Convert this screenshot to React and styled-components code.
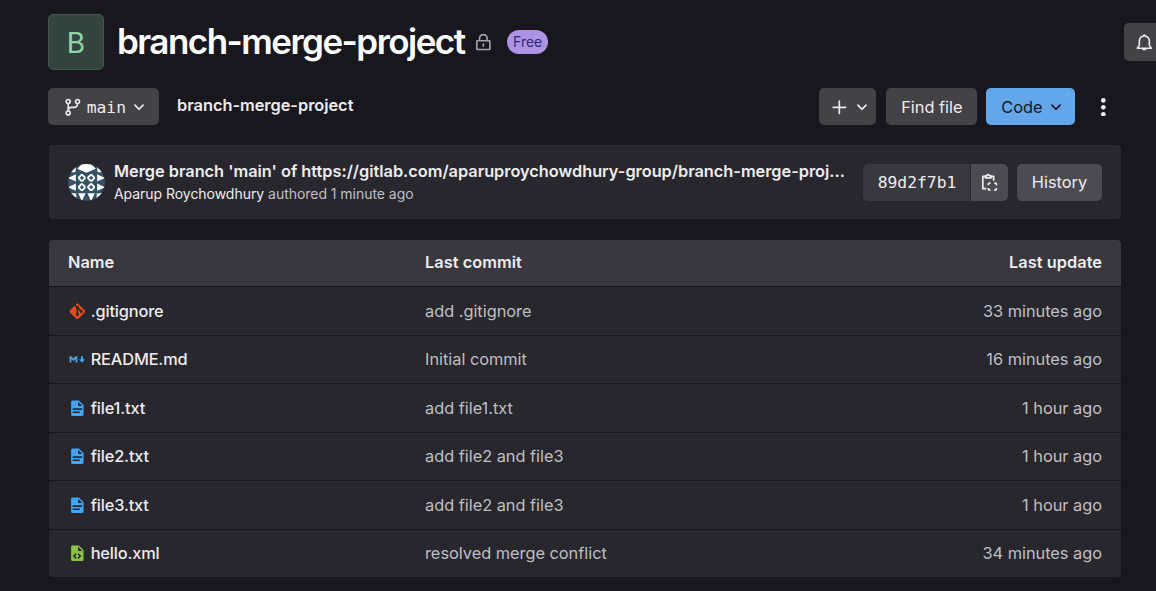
import React from "react";
import styled, { createGlobalStyle } from "styled-components";

const GlobalStyle = createGlobalStyle`
  * { box-sizing: border-box; }
  body {
    margin: 0;
    background: #18171d;
    color: #ececef;
    font-family: Inter, "Liberation Sans", sans-serif;
    font-size: 16.33px;
    overflow: hidden;
  }
`;

const Page = styled.main`
  width: 1156px;
  height: 591px;
  padding: 14px 0 0 48px;
  overflow: hidden;
`;

const Header = styled.header`
  display: flex;
  height: 56px;
`;

const ProjectAvatar = styled.div`
  width: 56px;
  height: 56px;
  padding-top: 2px;
  border-radius: 5px;
  border: 1px solid #41574d;
  background: #36443f;
  color: #91d4a8;
  font-size: 28px;
  display: flex;
  align-items: center;
  justify-content: center;
`;

const Title = styled.h1`
  margin: 0 0 0 13px;
  width: 349px;
  font-size: 35px;
  line-height: 54px;
  font-weight: 600;
  letter-spacing: -1.53px;
  color: #fff;
  white-space: nowrap;
`;

const LockSlot = styled.span`
  display: flex;
  margin: 19px 0 0 8px;
  color: #a4a3a8;
`;

const Badge = styled.span`
  margin: 16px 0 0 14px;
  width: 41px;
  height: 24px;
  padding-left: 1px;
  border-radius: 12px;
  background: #ac93e6;
  color: #2f2a6b;
  font-size: 14px;
  line-height: 24px;
  text-align: center;
`;

const Bar = styled.div`
  display: flex;
  margin-top: 18px;
  height: 37px;
  padding-right: 43px;
`;

const Button = styled.button`
  display: flex;
  align-items: center;
  justify-content: center;
  flex: none;
  gap: ${(p) => p.$gap || 0}px;
  width: ${(p) => p.$width}px;
  height: 37px;
  padding: 0;
  border: 0;
  border-radius: ${(p) => p.$radius || "5px"};
  background: ${(p) => p.$bg || "#434247"};
  color: ${(p) => p.$color || "#ececef"};
  font-family: ${(p) => (p.$mono ? '"DejaVu Sans Mono", monospace' : "inherit")};
  font-size: 16.33px;
  white-space: nowrap;
`;

const MenuButton = styled(Button)`
  padding: 1px 0 0 5px;
`;

const AddButton = styled(MenuButton)`
  margin-right: 1px;
`;

const ShaLabel = styled(Button)`
  padding-left: 1px;
`;

const BellButton = styled(Button)`
  height: 38px;
  margin: 9px 0 0 auto;
  justify-content: flex-start;
  padding-left: 11px;
  border-radius: 5px 0 0 5px;
`;

const Crumb = styled.strong`
  margin-left: 18px;
  font-weight: 600;
  line-height: 34px;
`;

const Actions = styled.div`
  display: flex;
  margin-left: auto;
  gap: 9px;
`;

const More = styled.span`
  display: flex;
  align-items: center;
  margin-left: 10px;
  padding-top: 1px;
`;

const CommitPanel = styled.section`
  display: flex;
  align-items: center;
  width: 1072px;
  height: 74px;
  margin: 20px 0 0 1px;
  padding: 0 19px;
  border-radius: 4px;
  background: #28272d;
`;

const CommitText = styled.div`
  margin-left: 9px;
  width: 740px;
`;

const CommitTitle = styled.div`
  font-weight: 600;
  line-height: 24px;
  letter-spacing: -0.01px;
  white-space: nowrap;
`;

const CommitMeta = styled.div`
  font-size: 14px;
  line-height: 22px;
  letter-spacing: -0.04px;
  color: #bfbfc3;
  span { color: #ececef; }
`;

const Joined = styled.div`
  display: flex;
  gap: 1px;
`;

const Table = styled.section`
  width: 1072px;
  margin: 21px 0 0 1px;
  border-radius: 4px;
  overflow: hidden;
  background: #28272d;
`;

const Row = styled.div`
  display: grid;
  grid-template-columns: 357px 1fr auto;
  align-items: center;
  height: ${(p) => (p.$head ? 47 : p.$last ? 47.5 : 48.5)}px;
  padding: 0 19px ${(p) => (p.$head ? 2 : 0)}px;
  border-bottom: ${(p) => (p.$last ? 0 : 1)}px solid #18171d;
  background: ${(p) => (p.$head ? "#3a383f" : "transparent")};
  color: ${(p) => (p.$head ? "#ececef" : "#bfbfc3")};
  font-weight: ${(p) => (p.$head ? 600 : 400)};
  letter-spacing: ${(p) => (p.$head ? "0.04px" : "-0.01px")};
  line-height: 24px;
`;

const IconSvg = styled.svg`
  flex: none;
`;

const FileName = styled.span`
  display: flex;
  align-items: center;
  gap: 4px;
  color: #ececef;
  font-weight: 500;
  letter-spacing: -0.14px;

  ${IconSvg} {
    margin-top: 1px;
  }
`;

function Icon({ size = 18.67, box = 16, color = "currentColor", children }) {
  return (
    <IconSvg width={size} height={size} viewBox={`0 0 ${box} ${box}`} fill={color}>
      {children}
    </IconSvg>
  );
}

const Chevron = () => (
  <Icon size={18}>
    <path d="M4.4 6.4 8 10l3.6-3.6" fill="none" stroke="currentColor" strokeWidth="1.5" strokeLinecap="round" strokeLinejoin="round" />
  </Icon>
);

const Branch = () => (
  <Icon>
    <g fill="none" stroke="currentColor" strokeWidth="1.4">
      <circle cx="3.6" cy="3" r="1.7" />
      <circle cx="3.6" cy="12.8" r="1.7" />
      <circle cx="11.6" cy="3" r="1.7" />
      <path d="M3.6 4.7v6.4M11.6 4.7v.5A2.75 2.75 0 0 1 8.85 8h-2.5A2.75 2.75 0 0 0 3.6 10.75" />
    </g>
  </Icon>
);

const Plus = () => (
  <Icon>
    <path d="M8 2.6v10.8M2.6 8h10.8" stroke="currentColor" strokeWidth="1.4" strokeLinecap="round" />
  </Icon>
);

const Lock = () => (
  <Icon>
    <g fill="none" stroke="currentColor" strokeWidth="1.4">
      <rect x="2.4" y="6.6" width="11.2" height="7.6" rx=".5" />
      <path d="M4.75 6.5V4.6a3.25 3.25 0 0 1 6.5 0v1.9M8 9v2.8" />
    </g>
  </Icon>
);

const Bell = () => (
  <Icon>
    <g fill="none" stroke="currentColor" strokeWidth="1.4" strokeLinejoin="round">
      <path d="M8 1v1.3M3.7 10.6V6.8a4.3 4.3 0 0 1 8.6 0v3.8l1.7 2.5H2z" />
      <path d="M6.8 14.2h2.4" strokeLinecap="round" />
    </g>
  </Icon>
);

const Dots = () => (
  <Icon>
    <circle cx="8" cy="2.1" r="2" />
    <circle cx="8" cy="8" r="2" />
    <circle cx="8" cy="13.9" r="2" />
  </Icon>
);

const Copy = () => (
  <Icon>
    <g fill="none" stroke="currentColor" strokeWidth="1.5">
      <path d="M4.5 2.9H2.4v10.6h2.4M9.5 2.9h2.2v3" strokeLinejoin="round" strokeLinecap="round" />
      <path d="M4.7 4.2V2.4h1a1.4 1.4 0 0 1 2.7 0h1v1.8z" strokeLinejoin="round" />
      <path d="M7.2 10.4v-1a.8.8 0 0 1 .8-.8h1M12.2 8.6h1a.8.8 0 0 1 .8.8v1M14 12.8v1a.8.8 0 0 1-.8.8h-1M9 14.6H8a.8.8 0 0 1-.8-.8v-1" />
    </g>
  </Icon>
);

const doc = "M13 9h5.5L13 3.5V9M6 2h8l6 6v12a2 2 0 0 1-2 2H6a2 2 0 0 1-2-2V4c0-1.11.89-2 2-2";

function FileIcon({ kind }) {
  if (kind === "git")
    return (
      <Icon box={24} color="#e64a19">
        <path d="M2.6 10.59 8.38 4.8l1.69 1.7c-.24.85.15 1.78.93 2.23v5.54c-.6.34-1 .99-1 1.73a2 2 0 0 0 4 0c0-.74-.4-1.39-1-1.73V9.41l2.07 2.09c-.07.15-.07.32-.07.5a2 2 0 1 0 2-2c-.18 0-.35 0-.5.07L13.93 7.5a1.98 1.98 0 0 0-1.15-2.34c-.43-.16-.88-.2-1.28-.09L9.8 3.38l.79-.78c.78-.79 2.04-.79 2.82 0l7.99 7.99c.79.78.79 2.04 0 2.82l-7.99 7.99c-.78.79-2.04.79-2.82 0L2.6 13.41c-.79-.78-.79-2.04 0-2.82z" />
      </Icon>
    );
  if (kind === "md")
    return (
      <Icon box={24} color="#42a5f5">
        <path d="M2 16V8h2.2l2.8 3 2.8-3H12v8h-2.4v-4.6L7 14.1l-2.6-2.7V16zM16.7 8h2.6v4H22l-4 4.5-4-4.5h2.7z" />
      </Icon>
    );
  if (kind === "xml")
    return (
      <Icon box={24} color="#8bc34a">
        <path fillRule="evenodd" d={doc + "m.12 13.5 3.74 3.74 1.42-1.41-2.33-2.33 2.33-2.33-1.42-1.41-3.74 3.74m11.16 0-3.74-3.74-1.42 1.41 2.33 2.33-2.33 2.33 1.42 1.41 3.74-3.74z"} />
      </Icon>
    );
  return (
    <Icon box={24} color="#42a5f5">
      <path fillRule="evenodd" d={doc + "m9 16v-2H6v2h9m3-4v-2H6v2h12z"} />
    </Icon>
  );
}

function Identicon() {
  return (
    <IconSvg width="37" height="37" viewBox="0 0 40 40">
      <clipPath id="round"><circle cx="20" cy="20" r="20" /></clipPath>
      <g clipPath="url(#round)">
        <rect width="40" height="40" fill="#335268" />
        <g fill="#fff">
          <path d="M10 5 15 0h10l5 5-10 4.5z" />
          <path d="M0 0h9L8 9 0 9zM40 0H31l1 9 8 0zM0 40V31l9 1v8zM40 40V31l-9 1v8z" />
          {[90, 180, 270].map((a) => (
            <path key={a} transform={`rotate(${a} 20 20)`} d="M11 8.5 15 0l4 8.5zM21 8.5l4-8.5 4 8.5z" />
          ))}
          {[15, 25].map((x) => [15, 25].map((y) => (
            <path key={`${x}-${y}`} fillRule="evenodd" d={`M${x - 1} ${y - 4.2}h2l3.2 3.2v2l-3.2 3.2h-2l-3.2-3.2v-2zM${x} ${y - 2.3}l2.3 2.3-2.3 2.3-2.3-2.3z`} />
          )))}
        </g>
      </g>
    </IconSvg>
  );
}

const files = [
  ["git", ".gitignore", "add .gitignore", "33 minutes ago"],
  ["md", "README.md", "Initial commit", "16 minutes ago"],
  ["txt", "file1.txt", "add file1.txt", "1 hour ago"],
  ["txt", "file2.txt", "add file2 and file3", "1 hour ago"],
  ["txt", "file3.txt", "add file2 and file3", "1 hour ago"],
  ["xml", "hello.xml", "resolved merge conflict", "34 minutes ago"],
];

export default function App() {
  return (
    <Page>
      <GlobalStyle />
      <Header>
        <ProjectAvatar>B</ProjectAvatar>
        <Title>branch-merge-project</Title>
        <LockSlot><Lock /></LockSlot>
        <Badge>Free</Badge>
        <BellButton $width={32}><Bell /></BellButton>
      </Header>
      <Bar>
        <MenuButton $width={111} $gap={4} $mono><Branch />main<Chevron /></MenuButton>
        <Crumb>branch-merge-project</Crumb>
        <Actions>
          <AddButton $width={57} $gap={4}><Plus /><Chevron /></AddButton>
          <Button $width={91}>Find file</Button>
          <MenuButton $width={89} $gap={5} $bg="#63a6e9" $color="#18171d">Code<Chevron /></MenuButton>
          <More><Dots /></More>
        </Actions>
      </Bar>
      <CommitPanel>
        <Identicon />
        <CommitText>
          <CommitTitle>Merge branch 'main' of https://gitlab.com/aparuproychowdhury-group/branch-merge-proj...</CommitTitle>
          <CommitMeta><span>Aparup Roychowdhury</span> authored 1 minute ago</CommitMeta>
        </CommitText>
        <Actions>
          <Joined>
            <ShaLabel $width={107} $bg="#3a383f" $radius="5px 0 0 5px" $mono>89d2f7b1</ShaLabel>
            <Button $width={37} $bg="#4c4b51" $radius="0 5px 5px 0"><Copy /></Button>
          </Joined>
          <Button $width={85} $bg="#4c4b51">History</Button>
        </Actions>
      </CommitPanel>
      <Table>
        <Row $head><span>Name</span><span>Last commit</span><span>Last update</span></Row>
        {files.map(([kind, name, commit, time], i) => (
          <Row key={name} $last={i === files.length - 1}>
            <FileName><FileIcon kind={kind} />{name}</FileName>
            <span>{commit}</span>
            <span>{time}</span>
          </Row>
        ))}
      </Table>
    </Page>
  );
}
